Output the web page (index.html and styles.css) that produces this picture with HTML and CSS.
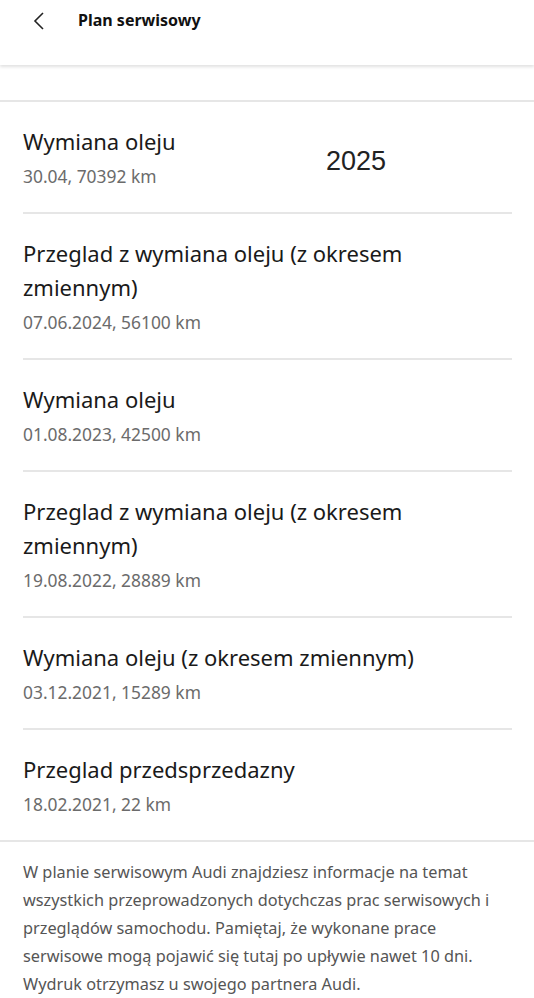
FILE: index.html
```html
<!DOCTYPE html>
<html lang="pl">
<head>
    <meta charset="UTF-8">
    <title>Plan serwisowy</title>
    <link rel="stylesheet" href="styles.css">
</head>
<body>

<div class="topbar">
    <span class="back">
        <svg width="12" height="20" viewBox="0 0 12 20"><path d="M10 2 L2 10 L10 18" fill="none" stroke="#222" stroke-width="1.6"/></svg>
    </span>
    <h1>Plan serwisowy</h1>
</div>

<div class="spacer"></div>

<ul class="list">
    <li class="item">
        <div class="title">Wymiana oleju</div>
        <div class="meta">30.04, 70392 km</div>
        <span class="year">2025</span>
    </li>
    <li class="item">
        <div class="title">Przeglad z wymiana oleju (z okresem zmiennym)</div>
        <div class="meta">07.06.2024, 56100 km</div>
    </li>
    <li class="item">
        <div class="title">Wymiana oleju</div>
        <div class="meta">01.08.2023, 42500 km</div>
    </li>
    <li class="item">
        <div class="title">Przeglad z wymiana oleju (z okresem zmiennym)</div>
        <div class="meta">19.08.2022, 28889 km</div>
    </li>
    <li class="item">
        <div class="title">Wymiana oleju (z okresem zmiennym)</div>
        <div class="meta">03.12.2021, 15289 km</div>
    </li>
    <li class="item">
        <div class="title">Przeglad przedsprzedazny</div>
        <div class="meta">18.02.2021, 22 km</div>
    </li>
</ul>

<p class="note">W planie serwisowym Audi znajdziesz informacje na temat wszystkich przeprowadzonych dotychczas prac serwisowych i przeglądów samochodu. Pamiętaj, że wykonane prace serwisowe mogą pojawić się tutaj po upływie nawet 10 dni. Wydruk otrzymasz u swojego partnera Audi.</p>

</body>
</html>
```

FILE: styles.css
```css
body { margin: 0; background: #fff; font-family: "Noto Sans", sans-serif; color: #1a1a1a; }
.topbar { height: 65px; display: flex; align-items: flex-start; box-shadow: 0 2px 3px rgba(0,0,0,0.12); position: relative; }
.back { width: 78px; padding: 11px 0 0 33px; box-sizing: border-box; }
.topbar h1 { margin: 0; padding-top: 9px; font-size: 16px; font-weight: 700; color: #111; }
.spacer { height: 35px; border-bottom: 2px solid #e6e6e6; }
.list { list-style: none; margin: 0; padding: 0; border-bottom: 2px solid #e6e6e6; }
.item { margin: 0 22px 0 23px; padding: 22px 0 24px; border-top: 2px solid #e6e6e6; position: relative; }
.item:first-child { border-top: none; }
.title { font-size: 22px; line-height: 34px; }
.meta { font-size: 17.4px; line-height: 24px; margin-top: 6px; color: #6b6b6b; }
.year { position: absolute; left: 303px; top: 44px; font-family: "Liberation Sans", Arial, sans-serif; font-size: 27px; color: #222; }
.note { margin: 0; padding: 16px 30px 0 23px; font-size: 16.3px; line-height: 28px; color: #555; }
```
